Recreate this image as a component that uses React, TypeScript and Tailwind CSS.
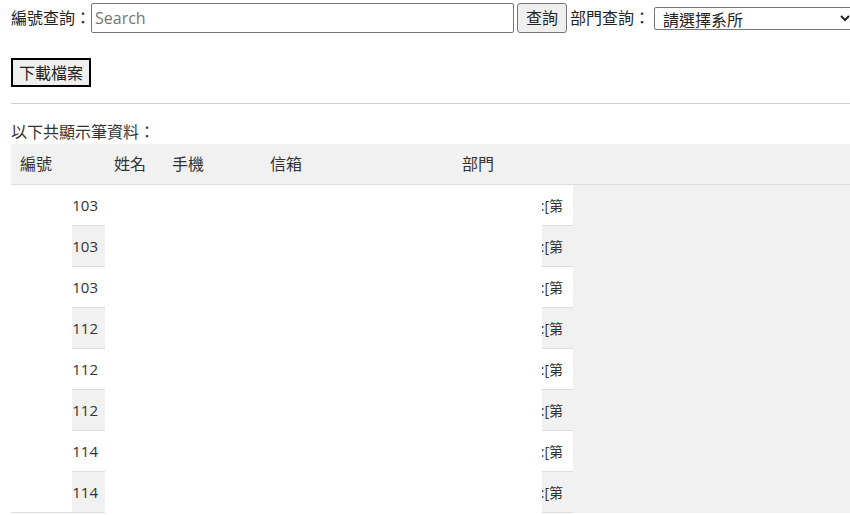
import React from 'react';

// rows as shown in the listing
const rows = [
  { id: '103', dept: ':[第' },
  { id: '103', dept: ':[第' },
  { id: '103', dept: ':[第' },
  { id: '112', dept: ':[第' },
  { id: '112', dept: ':[第' },
  { id: '112', dept: ':[第' },
  { id: '114', dept: ':[第' },
  { id: '114', dept: ':[第' },
];

export default function App() {
  return (
    <div className="h-[515px] w-[850px] overflow-hidden bg-white pl-[11px] text-[16px] text-[#222] font-['Open_Sans','Noto_Sans_CJK_TC',sans-serif]">
      {/* Search bar */}
      <div className="mt-[3px] flex h-[30px] items-center whitespace-nowrap">
        <span className="w-[80px]">編號查詢：</span>
        <input
          type="text"
          placeholder="Search"
          className="h-[30px] w-[423px] shrink-0 rounded-[2px] border border-[#767676] px-[3px] text-[16px] outline-none placeholder:text-[#757575]"
        />
        <button className="ml-[3px] h-[30px] w-[50px] shrink-0 rounded-[3px] border border-[#767676] bg-[#efefef] text-[16px]">
          查詢
        </button>
        <span className="ml-[3px] w-[80px]">部門查詢：</span>
        <select className="ml-[4px] h-[23px] w-[200px] shrink-0 rounded-[2px] border border-[#767676] bg-white pl-[4px] text-[16px] leading-[20px]">
          <option>請選擇系所</option>
        </select>
      </div>

      <button className="mt-[25px] block h-[29px] w-[80px] border-2 border-black bg-[#efefef] text-[16px] leading-[24px]">
        下載檔案
      </button>

      <div className="mt-[16px] border-t border-[#cfcfcf]" />

      <div className="mt-[16px] h-[24px] leading-[24px] text-[#333]">以下共顯示筆資料：</div>

      {/* Table */}
      <div className="w-[839px]">
        <div className="flex h-[41px] items-center border-b border-[#ddd] bg-[#f1f1f1] text-[#333]">
          <span className="w-[103px] pl-[9px]">編號</span>
          <span className="w-[58px]">姓名</span>
          <span className="w-[98px]">手機</span>
          <span className="w-[192px]">信箱</span>
          <span>部門</span>
        </div>
        {rows.map((r, i) => {
          const cellBg = i % 2 === 1 ? 'bg-[#f1f1f1]' : 'bg-white';
          const last = i === rows.length - 1;
          return (
            <div key={i} className="flex h-[41px] text-[#333]">
              <div className={`w-[61px] shrink-0 bg-white ${last ? 'border-b border-[#ddd]' : ''}`} />
              <div className={`flex w-[33px] shrink-0 items-center justify-end overflow-hidden whitespace-nowrap border-b border-[#ddd] pr-[7px] text-[15px] ${cellBg}`}>
                {'1' + r.id}
              </div>
              <div className="w-[437px] shrink-0 bg-white" />
              <div className={`flex w-[31px] shrink-0 items-center justify-end overflow-hidden whitespace-nowrap border-b border-[#ddd] pr-[10px] text-[14px] ${cellBg}`}>
                {r.dept}
              </div>
              <div className="flex-1 bg-[#f1f1f1]" />
            </div>
          );
        })}
      </div>
    </div>
  );
}
